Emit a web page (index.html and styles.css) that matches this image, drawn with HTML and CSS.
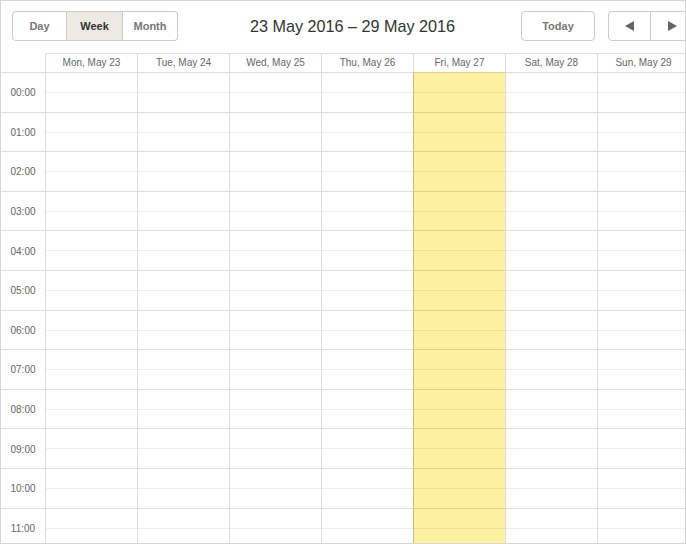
FILE: index.html
```html
<!DOCTYPE html>
<html>
<head>
<meta charset="utf-8">
<link rel="stylesheet" href="styles.css">
</head>
<body>
<div class="frame">
  <div class="cal">
    <div class="toolbar">
      <div class="left">
        <div class="group">
          <button class="btn">Day</button>
          <button class="btn active">Week</button>
          <button class="btn">Month</button>
        </div>
      </div>
      <h2 class="title">23 May 2016 – 29 May 2016</h2>
      <div class="right">
        <button class="btn single">Today</button>
        <div class="group">
          <button class="btn arrow"><svg width="10" height="10" viewBox="0 0 10 10"><polygon points="9,0 9,10 0,5" fill="#666"/></svg></button>
          <button class="btn arrow"><svg width="10" height="10" viewBox="0 0 10 10"><polygon points="1,0 1,10 10,5" fill="#666"/></svg></button>
        </div>
      </div>
    </div>
    <div class="head">
      <div class="axis-head"></div>
      <div class="dh">Mon, May 23</div>
      <div class="dh">Tue, May 24</div>
      <div class="dh">Wed, May 25</div>
      <div class="dh">Thu, May 26</div>
      <div class="dh">Fri, May 27</div>
      <div class="dh">Sat, May 28</div>
      <div class="dh">Sun, May 29</div>
    </div>
    <div class="body" id="body"></div>
  </div>
</div>
<script src="app.js"></script>
</body>
</html>
```
FILE: app.js
```js
(function () {
  var body = document.getElementById('body');
  var html = '';
  for (var h = 0; h < 12; h++) {
    var label = (h < 10 ? '0' + h : '' + h) + ':00';
    html += '<div class="axis">' + label + '</div>';
    for (var d = 0; d < 7; d++) {
      html += '<div class="slot' + (d === 4 ? ' today' : '') + '"></div>';
    }
  }
  body.innerHTML = html;
})();
```
FILE: styles.css
```css
* { box-sizing: border-box; }
html, body { margin: 0; padding: 0; background: #fff; }
body { font-family: "Liberation Sans", Arial, sans-serif; }

.frame {
  width: 686px;
  height: 544px;
  border: 1px solid #d6d6d6;
  overflow: hidden;
}
.cal { width: 703px; }

.toolbar {
  display: grid;
  grid-template-columns: 1fr auto 1fr;
  align-items: center;
  padding: 10px 11px 12px;
}
.left { display: flex; }
.right { display: flex; justify-content: flex-end; gap: 13px; }
.title {
  margin: 0;
  font-size: 16.2px;
  font-weight: normal;
  color: #333;
  white-space: nowrap;
}
.group { display: flex; }
.btn {
  height: 30px;
  margin: 0;
  padding: 0;
  border: 1px solid #ccc;
  background: #fff;
  font-family: "Liberation Sans", Arial, sans-serif;
  font-size: 11px;
  font-weight: bold;
  color: #777;
  display: flex;
  align-items: center;
  justify-content: center;
}
.group .btn { width: 55px; border-radius: 0; }
.group .btn + .btn { border-left: none; width: 56px; }
.group .btn.last { width: 55px; }
.group .btn:first-child { border-radius: 4px 0 0 4px; }
.group .btn:last-child { border-radius: 0 4px 4px 0; width: 55px; }
.group .btn.active { background: #edeae4; color: #333; }
.single { width: 74px; border-radius: 4px; }
.group .btn.arrow { width: 43px; }
.group .btn.arrow + .btn.arrow { width: 43px; border-left: 1px solid #ccc; margin-left: -1px; }

.head, .body {
  display: grid;
  grid-template-columns: 44px repeat(7, 92px);
}
.dh {
  height: 19px;
  line-height: 18px;
  border-top: 1px solid #ddd;
  border-left: 1px solid #ddd;
  text-align: center;
  font-size: 10px;
  color: #666;
  white-space: nowrap;
}
.body { grid-auto-rows: 39.6px; }
.axis {
  border-top: 1px solid #ddd;
  font-size: 10px;
  color: #666;
  display: flex;
  align-items: center;
  justify-content: center;
  padding-top: 1px;
}
.slot {
  border-top: 1px solid rgba(0, 0, 0, 0.135);
  border-left: 1px solid rgba(0, 0, 0, 0.135);
  background-image: linear-gradient(rgba(0, 0, 0, 0.065), rgba(0, 0, 0, 0.065));
  background-size: 100% 1px;
  background-position: 0 19px;
  background-repeat: no-repeat;
  background-origin: padding-box;
}
.slot.today {
  background-color: #fdf0a0;
  border-left-color: rgba(0, 0, 0, 0.2);
}
```
